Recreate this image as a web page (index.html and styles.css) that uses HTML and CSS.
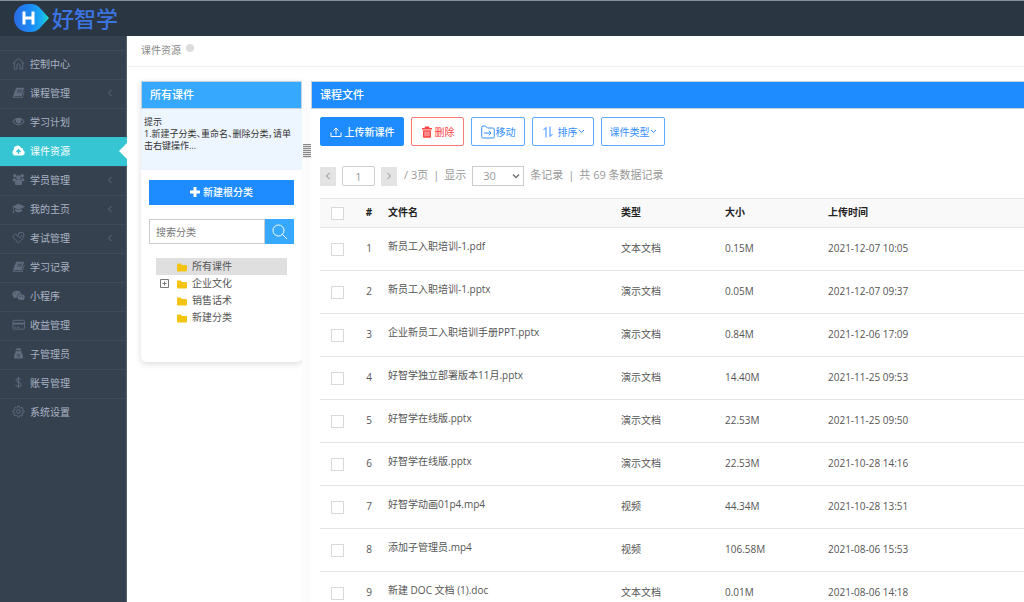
FILE: index.html
```html
<!DOCTYPE html>
<html lang="zh-CN">
<head>
<meta charset="utf-8">
<meta name="viewport" content="width=device-width, initial-scale=1">
<title>课件资源 - 好智学</title>
<link rel="stylesheet" href="styles.css">
</head>
<body>
<header class="topbar">
  <a class="brand" href="#">
    <svg class="brand-mark" viewBox="0 0 36 28" aria-hidden="true">
      <defs>
        <linearGradient id="drop" x1="0" y1="0" x2="1" y2="0"><stop offset="0" stop-color="#2b6be4"/><stop offset=".5" stop-color="#1a8cf5"/><stop offset=".8" stop-color="#19aef0"/><stop offset="1" stop-color="#1fe0c8"/></linearGradient>
      </defs>
      <path d="M14 0H18Q22 0 25 3L35 14 25 25Q22 28 18 28H14A14 14 0 0 1 14 0Z" fill="url(#drop)"/>
      <path d="M10 7.500V20.500M19 7.500V20.500M10 14H19" stroke="#fff" stroke-width="3" fill="none"/>
    </svg>
    <span class="brand-name">好智学</span>
  </a>
</header>
<div class="shell">
  <nav class="sidebar">
    <ul class="menu">
      <li><a href="#"><svg class="ico" viewBox="0 0 14 14"><path class="ln" d="M1 7 7 1.500 13 7M2.500 6V13H5.300V9A1.700 1.700 0 0 1 8.700 9V13H11.500V6"/></svg><span>控制中心</span></a></li>
      <li><a href="#"><svg class="ico" viewBox="0 0 14 14"><path d="M4.500 2H13L10.500 11H2.500Q1.500 11.500 2.500 12H11L13 5.500 13.500 6 11.500 13H2Q.5 12.500 1 11Z"/><path class="cut" d="M6 4.500H11M5.500 6.500H10.500"/></svg><span>课程管理</span><svg class="angle" viewBox="0 0 6 8"><path d="M4.500 1 1.500 4 4.500 7"/></svg></a></li>
      <li><a href="#"><svg class="ico" viewBox="0 0 14 14"><path fill-rule="evenodd" d="M.5 7Q3 3 7 3T13.500 7Q11 11 7 11T.5 7ZM1.700 7Q3.800 10 7 10T12.300 7Q11.300 5.500 9.700 4.700 11 8.500 7 9.500 3 8.500 4.300 4.700 2.700 5.500 1.700 7Z"/><circle cx="7" cy="6.500" r="2.300"/></svg><span>学习计划</span></a></li>
      <li class="active"><a href="#" aria-current="page"><svg class="ico" viewBox="0 0 14 14"><path d="M3.500 12.500A3.400 3.400 0 0 1 2 6.300 4 4 0 0 1 9.500 3.800 2.700 2.700 0 0 1 12 6.800 3 3 0 0 1 11 12.500Z"/><path class="cut" d="M7 10.800V7M4.800 8.500 7 6.300 9.200 8.500"/></svg><span>课件资源</span></a></li>
      <li><a href="#"><svg class="ico" viewBox="0 0 14 14"><circle cx="3" cy="3" r="1.800"/><circle cx="11" cy="3" r="1.800"/><circle cx="7" cy="5" r="2.500"/><path d="M.5 8Q.5 5 3 5.300L4.500 7.500 3 9H1ZM13.500 8Q13.500 5 11 5.300L9.500 7.500 11 9H13ZM3 11Q3 7.500 5 7.500H9Q11 7.500 11 11 11 13 9.500 13H4.500Q3 13 3 11Z"/></svg><span>学员管理</span><svg class="angle" viewBox="0 0 6 8"><path d="M4.500 1 1.500 4 4.500 7"/></svg></a></li>
      <li><a href="#"><svg class="ico" viewBox="0 0 14 14"><path d="M0 5 7 2 14 5 7 8ZM3.500 7.300 7 8.800 10.500 7.300V10Q7 12.500 3.500 10ZM1.300 6 2 6.300V9L2.500 12H.8L1.300 9Z"/></svg><span>我的主页</span><svg class="angle" viewBox="0 0 6 8"><path d="M4.500 1 1.500 4 4.500 7"/></svg></a></li>
      <li><a href="#"><svg class="ico" viewBox="0 0 14 14"><path class="ln" d="M7 12.800 1.500 7.300Q.5 4 4 3.500L6.500 5.500 7.500 2Q12.500.500 12.800 3.500 13.500 7 7 12.800ZM6.500 5.500 8.500 7.500 11 4.500"/></svg><span>考试管理</span><svg class="angle" viewBox="0 0 6 8"><path d="M4.500 1 1.500 4 4.500 7"/></svg></a></li>
      <li><a href="#"><svg class="ico" viewBox="0 0 14 14"><path d="M4.500 2H13L10.500 11H2.500Q1.500 11.500 2.500 12H11L13 5.500 13.500 6 11.500 13H2Q.5 12.500 1 11Z"/><path class="cut" d="M6 4.500H11M5.500 6.500H10.500"/></svg><span>学习记录</span></a></li>
      <li><a href="#"><svg class="ico" viewBox="0 0 14 14"><path d="M5.200 2C8 2 9.500 3.500 9.800 5 7 5 4.700 7 5.200 9.300L3.300 9.300 1.500 10.500 2 8.800C-1.500 6.300.5 2 5.200 2Z"/><path d="M9.800 5.600C14 5.600 15 9.300 12.500 11L12.800 12.500 11.300 11.700C8 12.500 5.800 10.500 5.800 8.800 5.800 7 7.500 5.600 9.800 5.600Z"/><path class="cut" d="M3 4.700H4M6.300 4.700H7.300M8 8H9M10.500 8H11.500"/></svg><span>小程序</span></a></li>
      <li><a href="#"><svg class="ico" viewBox="0 0 14 14"><rect class="ln" x="1" y="2.500" width="12.500" height="9.500" rx="1"/><path d="M1 5H13.500V7H1Z"/><path class="ln" d="M3 10H4.500M5.500 10H8"/></svg><span>收益管理</span></a></li>
      <li><a href="#"><svg class="ico" viewBox="0 0 14 14"><path d="M4 4Q4 1 7 1T10 4L10.300 6Q12 8 11.800 12.500H2.200Q2 8 3.700 6Z"/><path class="cut" d="M4.500 4H9.500M5 8.500H9M6 10.500H8"/></svg><span>子管理员</span></a></li>
      <li><a href="#"><svg class="ico" viewBox="0 0 14 14"><path class="ln" d="M10 4.300Q9.500 2.800 7 2.800T4.200 4.800Q4.200 6.300 7 6.800T10 9.300Q10 11.200 7 11.200T4 9.500M7 1V13"/></svg><span>账号管理</span></a></li>
      <li><a href="#"><svg class="ico" viewBox="0 0 14 14"><circle class="ln" cx="7" cy="7" r="2"/><path class="ln" d="M6 1.200H8L8.400 2.900 9.500 3.400 11 2.500 12 3.900 11 5.200 11.400 6.100 13 6.400V8L11.300 8.300 10.900 9.300 11.700 10.800 10.500 12 9.200 11.100 8.300 11.400 8 13H6L5.700 11.400 4.700 11 3.300 11.900 2.100 10.600 3 9.200 2.600 8.300 1 8V6.200L2.700 5.800 3.100 4.800 2.200 3.400 3.500 2.200 4.800 3.100 5.700 2.800Z"/></svg><span>系统设置</span></a></li>
    </ul>
  </nav>
  <main class="content">
    <div class="crumbs"><span>课件资源</span><i class="dot"></i></div>
    <div class="columns">
      <aside class="tree-panel">
        <h2 class="panel-head light">所有课件</h2>
        <div class="tip">提示<br>1.新建子分类、重命名、删除分类，请单击右键操作...</div>
        <div class="tree-body">
          <button class="add-root" type="button"><svg viewBox="0 0 10 10"><path d="M3.500 0H6.500V3.500H10V6.500H6.500V10H3.500V6.500H0V3.500H3.500Z"/></svg>新建根分类</button>
          <form class="search">
            <input type="text" placeholder="搜索分类" aria-label="搜索分类">
            <button type="button" aria-label="搜索"><svg viewBox="0 0 16 16"><circle cx="6.500" cy="6.500" r="5.500"/><path d="M10.500 10.500 15 15"/></svg></button>
          </form>
          <ul class="tree">
            <li class="selected"><span class="toggle"></span><svg class="folder" viewBox="0 0 10 9"><path d="M0 1.500Q0 .5 1 .5H3.500Q4.500.500 4.700 2H9Q10 2 10 3V7.500Q10 8.500 9 8.500H1Q0 8.500 0 7.500Z"/></svg>所有课件</li>
            <li><span class="toggle"><button type="button" aria-label="展开企业文化"><svg viewBox="0 0 9 9"><path d="M.5.500H8.500V8.500H.5ZM2.500 4.500H6.500M4.500 2.500V6.500"/></svg></button></span><svg class="folder" viewBox="0 0 10 9"><path d="M0 1.500Q0 .5 1 .5H3.500Q4.500.500 4.700 2H9Q10 2 10 3V7.500Q10 8.500 9 8.500H1Q0 8.500 0 7.500Z"/></svg>企业文化</li>
            <li><span class="toggle"></span><svg class="folder" viewBox="0 0 10 9"><path d="M0 1.500Q0 .5 1 .5H3.500Q4.500.500 4.700 2H9Q10 2 10 3V7.500Q10 8.500 9 8.500H1Q0 8.500 0 7.500Z"/></svg>销售话术</li>
            <li><span class="toggle"></span><svg class="folder" viewBox="0 0 10 9"><path d="M0 1.500Q0 .5 1 .5H3.500Q4.500.500 4.700 2H9Q10 2 10 3V7.500Q10 8.500 9 8.500H1Q0 8.500 0 7.500Z"/></svg>新建分类</li>
          </ul>
        </div>
      </aside>
      <div class="splitter"><span class="grip"></span></div>
      <section class="files">
        <h2 class="panel-head">课程文件</h2>
        <div class="files-body">
          <div class="toolbar">
            <button class="btn primary" type="button"><svg class="bi" viewBox="0 0 12 12"><path d="M1 6.500V10.500H11V6.500M6 8.500V2M3.500 4.500 6 2 8.500 4.500"/></svg>上传新课件</button>
            <button class="btn danger" type="button"><svg class="bi" viewBox="0 0 12 12"><path class="solid" fill-rule="evenodd" d="M4 .5H8L8.500 2H11V3.500H1V2H3.500ZM2 4.200H10V10.500Q10 11.700 9 11.700H3Q2 11.700 2 10.500ZM3.700 5.500V10.300H4.400V5.500ZM5.650 5.500V10.300H6.350V5.500ZM7.600 5.500V10.300H8.300V5.500Z"/></svg>删除</button>
            <button class="btn move" type="button"><svg class="bi wide" viewBox="0 0 14 14"><path d="M.7 11.500V2.500Q.7 1 2 1H4.500L6.500 3H11.500Q13.300 3 13.300 4.500V11.500Q13.300 13 11.800 13H2.200Q.7 13 .7 11.500ZM3 8H10M7.800 5.700 10 8 7.800 10.300"/></svg>移动</button>
            <button class="btn sort" type="button"><svg class="bi" viewBox="0 0 12 12"><path d="M1.500 4 4 1.500V11.500M8 .5V10.500L10.500 8"/></svg>排序<svg class="caret" viewBox="0 0 7 5"><path d="M1 1 3.500 3.500 6 1"/></svg></button>
            <button class="btn kind" type="button">课件类型<svg class="caret" viewBox="0 0 7 5"><path d="M1 1 3.500 3.500 6 1"/></svg></button>
          </div>
          <div class="pager">
            <button class="step" type="button" aria-label="上一页"><svg viewBox="0 0 6 8"><path d="M4.500 1 1.500 4 4.500 7"/></svg></button>
            <input class="page-no" type="text" value="1" aria-label="页码">
            <button class="step" type="button" aria-label="下一页"><svg viewBox="0 0 6 8"><path d="M1.500 1 4.500 4 1.500 7"/></svg></button>
            <span class="pages">/ 3页</span><span class="bar">|</span><label for="size">显示</label>
            <span class="select"><select id="size"><option>30</option><option>50</option><option>100</option></select><svg viewBox="0 0 8 6"><path d="M1 1.500 4 4.500 7 1.500"/></svg></span>
            <span>条记录</span><span class="bar">|</span><span>共 69 条数据记录</span>
          </div>
          <table class="grid">
            <colgroup><col class="c-check"><col class="c-no"><col class="c-name"><col class="c-type"><col class="c-size"><col></colgroup>
            <thead><tr><th><input type="checkbox" aria-label="全选"></th><th>#</th><th>文件名</th><th>类型</th><th>大小</th><th>上传时间</th></tr></thead>
            <tbody>
              <tr><td><input type="checkbox" aria-label="选择 1"></td><td>1</td><td class="name">新员工入职培训-1.pdf</td><td>文本文档</td><td>0.15M</td><td>2021-12-07 10:05</td></tr>
              <tr><td><input type="checkbox" aria-label="选择 2"></td><td>2</td><td class="name">新员工入职培训-1.pptx</td><td>演示文档</td><td>0.05M</td><td>2021-12-07 09:37</td></tr>
              <tr><td><input type="checkbox" aria-label="选择 3"></td><td>3</td><td class="name">企业新员工入职培训手册PPT.pptx</td><td>演示文档</td><td>0.84M</td><td>2021-12-06 17:09</td></tr>
              <tr><td><input type="checkbox" aria-label="选择 4"></td><td>4</td><td class="name">好智学独立部署版本11月.pptx</td><td>演示文档</td><td>14.40M</td><td>2021-11-25 09:53</td></tr>
              <tr><td><input type="checkbox" aria-label="选择 5"></td><td>5</td><td class="name">好智学在线版.pptx</td><td>演示文档</td><td>22.53M</td><td>2021-11-25 09:50</td></tr>
              <tr><td><input type="checkbox" aria-label="选择 6"></td><td>6</td><td class="name">好智学在线版.pptx</td><td>演示文档</td><td>22.53M</td><td>2021-10-28 14:16</td></tr>
              <tr><td><input type="checkbox" aria-label="选择 7"></td><td>7</td><td class="name">好智学动画01p4.mp4</td><td>视频</td><td>44.34M</td><td>2021-10-28 13:51</td></tr>
              <tr><td><input type="checkbox" aria-label="选择 8"></td><td>8</td><td class="name">添加子管理员.mp4</td><td>视频</td><td>106.58M</td><td>2021-08-06 15:53</td></tr>
              <tr><td><input type="checkbox" aria-label="选择 9"></td><td>9</td><td class="name">新建 DOC 文档 (1).doc</td><td>文本文档</td><td>0.01M</td><td>2021-08-06 14:18</td></tr>
            </tbody>
          </table>
        </div>
      </section>
    </div>
  </main>
</div>
</body>
</html>
```
FILE: styles.css
```css
* { box-sizing: border-box; }
body {
  margin: 0;
  font: 10px/14px "Open Sans", "Noto Sans CJK SC", sans-serif;
  color: #555;
  background: #fff;
}
ul { list-style: none; margin: 0; padding: 0; }
a { color: inherit; text-decoration: none; }
h2 { margin: 0; }
svg { display: block; flex: none; }
button, input, select { font: inherit; color: inherit; margin: 0; padding: 0; border-radius: 0; }
button { cursor: pointer; border: 0; background: none; }

/* header */
.topbar {
  display: flex;
  align-items: center;
  height: 36px;
  padding: 0 14px 2px;
  background: #2b3643;
  border-top: 1px solid #8a9097;
}
.brand { display: flex; align-items: center; gap: 2px; color: #3b74e0; }
.brand-mark { width: 36px; height: 28px; }
.brand-name { font-size: 22px; line-height: 30px; font-weight: 500; }

/* sidebar */
.shell { display: flex; min-height: calc(100vh - 36px); }
.sidebar { flex: none; width: 127px; padding-top: 14px; background: #364150; border-right: 1px solid #566170; }
.menu a {
  display: flex;
  align-items: center;
  height: 29px;
  padding: 0 13px 3px 12px;
  border-top: 1px solid #3e4b5c;
  color: #a9b3c3;
}
.menu span { margin-left: 5px; flex: 1; }
.ico { width: 13px; height: 13px; fill: #606c7d; }
.ico .ln { fill: none; stroke: #606c7d; stroke-width: 1; }
.ico .cut { fill: none; stroke: #364150; stroke-width: 1; }
.angle { width: 6px; height: 8px; fill: none; stroke: #606c7d; }
.menu .active { position: relative; margin-right: -1px; }
.menu .active a { background: #36c6d3; border-top-color: #36c6d3; color: #fff; }
.active .ico { fill: #fff; }
.active .ico .cut { stroke: #36c6d3; stroke-width: 1.5; }
.active::after {
  content: "";
  position: absolute;
  right: 0;
  top: 6px;
  border: 8px solid transparent;
  border-left: 0;
  border-right-color: #fff;
}

/* page */
.content { flex: 1; min-width: 0; }
.crumbs {
  display: flex;
  align-items: center;
  gap: 5px;
  height: 31px;
  padding: 0 13px 3px 14px;
  border-bottom: 1px solid #eef1f5;
  color: #888;
}
.dot { width: 8px; height: 8px; margin-bottom: 3px; border-radius: 50%; background: #dcdcdc; }
.columns { display: flex; align-items: flex-start; padding: 14px 0 0 14px; }
.panel-head {
  height: 28px;
  padding: 0 8px;
  border: 1px solid #c5d3e0;
  background: #1e8cff;
  color: #fff;
  font-size: 11px;
  line-height: 25px;
  font-weight: 500;
}
.panel-head.light { background: #36a9ff; }

/* category tree */
.tree-panel {
  flex: none;
  width: 161px;
  height: 281px;
  border-radius: 0 0 5px 5px;
  background: #fff;
  box-shadow: 0 2px 6px rgba(0, 0, 0, .14);
}
.tip {
  min-height: 61px;
  padding: 7px 8px 7px 3px;
  background: #edf6ff;
  color: #333;
  font-size: 9px;
  line-height: 12px;
  font-feature-settings: "palt";
}
.tree-body { padding: 10px 8px; }
.add-root {
  display: flex;
  align-items: center;
  justify-content: center;
  gap: 3px;
  width: 100%;
  height: 25px;
  padding-bottom: 2px;
  background: #1e8cff;
  color: #fff;
  font-weight: 500;
}
.add-root svg { width: 10px; height: 10px; fill: #fff; }
.search { display: flex; height: 25px; margin-top: 14px; }
.search input { flex: 1; min-width: 0; padding: 0 6px; border: 1px solid #c8ccd2; }
.search input::placeholder { color: #777; opacity: 1; }
.search button { display: grid; place-items: center; width: 29px; background: #36a9ff; }
.search svg { width: 16px; height: 16px; fill: none; stroke: #fff; stroke-width: 1; }
.tree { padding: 14px 7px; }
.tree li { display: flex; align-items: center; height: 17px; padding-bottom: 2px; }
.tree .selected { background: #dfdfdf; }
.toggle { width: 21px; padding: 2px 0 0 4px; }
.toggle svg { width: 9px; height: 9px; fill: none; stroke: #777; }
.toggle button { display: block; }
.folder { width: 10px; height: 9px; margin: 4px 5px 0 0; fill: #f3c512; }

.splitter { flex: none; align-self: stretch; display: flex; justify-content: center; width: 9px; background: #fcfcfc; }
.grip {
  width: 8px;
  height: 14px;
  margin-top: 63px;
  background: repeating-linear-gradient(#888 0 1px, #e4e4e4 1px 2px);
}

/* file list */
.files { flex: 1; min-width: 0; }
.files .panel-head { border-right: 0; }
.files-body { padding: 8px 0 0 9px; }
.toolbar { display: flex; gap: 7px; }
.btn {
  display: flex;
  align-items: center;
  justify-content: center;
  height: 29px;
  border: 1px solid #59acff;
  border-radius: 2px;
  background: #fff;
  color: #338fff;
}
.bi { width: 12px; height: 12px; margin-right: 3px; fill: none; stroke: currentColor; stroke-width: 1; }
.bi .solid { fill: currentColor; stroke: none; }
.bi.wide { width: 14px; height: 14px; margin-right: 1px; }
.caret { width: 7px; height: 5px; fill: none; stroke: currentColor; }
.primary { width: 84px; background: #1e8cff; border-color: #1e8cff; color: #fff; font-weight: 500; }
.danger { width: 53px; border-color: #f77; color: #f44; }
.danger .bi { margin-right: 2px; }
.move { width: 54px; }
.sort { width: 62px; }
.sort .bi { margin-right: 4px; }
.kind { width: 64px; }

.pager { display: flex; align-items: center; height: 20px; margin: 20px 0 12px; color: #999; font-size: 11px; line-height: 16px; }
.pager > span, .pager > label { padding-bottom: 2px; }
.pager .select { padding: 0; }
.step { display: grid; place-items: center; width: 16px; height: 19px; background: #e3e3e3; }
.step svg { width: 6px; height: 8px; fill: none; stroke: #888; }
.page-no { width: 33px; height: 20px; margin: 0 6px; border: 1px solid #d0d0d0; border-radius: 2px; text-align: center; }
.pages { margin-left: 7px; }
.bar { margin: 0 5px; }
.select { position: relative; margin: 0 6px; }
.select select {
  display: block;
  appearance: none;
  width: 52px;
  height: 20px;
  padding: 0 10px;
  border: 1px solid #ccc;
  background: #fff;
}
.select svg { position: absolute; right: 4px; top: 7px; width: 8px; height: 6px; fill: none; stroke: #777; stroke-width: 1.5; pointer-events: none; }

.grid { width: 100%; table-layout: fixed; border-collapse: collapse; border-top: 1px solid #e4e4e4; }
.c-check { width: 35px; }
.c-no { width: 28px; }
.c-name { width: 233px; }
.c-type { width: 104px; }
.c-size { width: 103px; }
.grid th, .grid td { padding: 0 0 2px 5px; text-align: left; border-bottom: 1px solid #e4e4e4; }
.grid th { height: 29px; background: #f9f9f9; color: #222; font-weight: 700; }
.grid td { height: 43px; }
.grid th:first-child, .grid td:first-child { padding: 0; }
.grid th:nth-child(2), .grid td:nth-child(2) { padding: 0 0 2px; text-align: center; }
.grid .name { padding-bottom: 6px; }
.grid input {
  appearance: none;
  display: block;
  width: 13px;
  height: 13px;
  margin: 0 auto;
  border: 1px solid #d9d9d9;
  background: #fff;
}
```
